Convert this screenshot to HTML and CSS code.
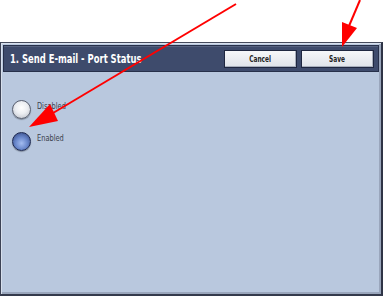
FILE: index.html
```html
<!DOCTYPE html>
<html lang="en">
<head>
    <meta charset="UTF-8">
    <title>Send E-mail - Port Status</title>
    <link rel="stylesheet" href="styles.css">
</head>
<body>
    <div class="page">
        <div class="screen">
            <div class="title-bar">
                <h1 class="title">1. Send E-mail - Port Status</h1>
                <div class="actions">
                    <button class="btn"><span class="btn-text">Cancel</span></button>
                    <button class="btn"><span class="btn-text">Save</span></button>
                </div>
            </div>

            <div class="options">
                <label class="option">
                    <span class="radio"></span>
                    <span class="option-label">Disabled</span>
                </label>
                <label class="option">
                    <span class="radio radio-on"></span>
                    <span class="option-label">Enabled</span>
                </label>
            </div>
        </div>

        <!-- callout arrows drawn over the screen -->
        <svg class="callouts" width="385" height="298" viewBox="0 0 385 298">
            <line x1="236" y1="4" x2="48" y2="116" stroke="#ff0000" stroke-width="2"/>
            <polygon points="29,127 50,104 58,121" fill="#ff0000"/>
            <line x1="360" y1="0" x2="349" y2="26" stroke="#ff0000" stroke-width="2"/>
            <polygon points="342,47 342,22 357,28" fill="#ff0000"/>
        </svg>
    </div>
</body>
</html>
```

FILE: styles.css
```css
body {
    margin: 0;
    padding: 0;
    background: #fff;
    font-family: 'DejaVu Sans Condensed', 'Liberation Sans', sans-serif;
}

.page {
    position: relative;
    width: 385px;
    height: 298px;
    overflow: hidden;
}

.screen {
    margin-top: 42px;
    width: 383px;
    height: 254px;
    background: #b9c8de;
    border-top: 1px solid #454b5c;
    border-left: 1px solid #3c4254;
    border-right: 2px solid #2e3446;
    border-bottom: 2px solid #343a4c;
    box-shadow: inset 1px 1px 0 #d7dfec, inset -2px -2px 0 #9aa6bc;
    box-sizing: border-box;
    padding: 2px 2px 0 2px;
}

.title-bar {
    display: flex;
    align-items: center;
    justify-content: space-between;
    height: 25px;
    background: #3e4b6c;
    border: 1px solid #27304a;
    box-shadow: inset 0 1px 0 #56627f;
    padding: 0 4px 0 6px;
}

/* the panel font is very narrow, so squeeze the condensed face */
.title {
    margin: 0;
    color: #fff;
    font-size: 13px;
    font-weight: bold;
    white-space: nowrap;
    transform: scaleX(0.72);
    transform-origin: left center;
}

.actions {
    display: flex;
    gap: 4px;
}

.btn {
    width: 73px;
    height: 18px;
    padding: 0;
    border: 1px solid #1f2740;
    background: linear-gradient(#f6f7f9, #dfe3e9);
    box-shadow: inset -1px -1px 0 #a8afbd;
    font-family: 'DejaVu Sans Condensed', sans-serif;
    font-size: 9px;
    font-weight: bold;
    color: #222;
}

.btn-text {
    display: inline-block;
    transform: scaleX(0.72);
}

.options {
    display: flex;
    flex-direction: column;
    gap: 13px;
    padding: 28px 0 0 9px;
}

.option {
    display: flex;
    align-items: flex-start;
    gap: 6px;
}

.radio {
    width: 17px;
    height: 17px;
    border-radius: 50%;
    border: 1px solid #5a6070;
    background: radial-gradient(circle at 50% 40%, #ffffff 0%, #eceef2 45%, #b5bac4 100%);
    box-shadow: 0 1px 1px rgba(0, 0, 0, 0.3);
}

.radio-on {
    border-color: #1c2850;
    background: radial-gradient(circle at 50% 60%, #a3bcf0 0%, #6a88cc 45%, #2c3f78 100%);
}

.option-label {
    margin-top: 1px;
    font-size: 9px;
    color: #3a3f4c;
    transform: scaleX(0.82);
    transform-origin: left center;
}

.callouts {
    position: absolute;
    top: 0;
    left: 0;
}
```
